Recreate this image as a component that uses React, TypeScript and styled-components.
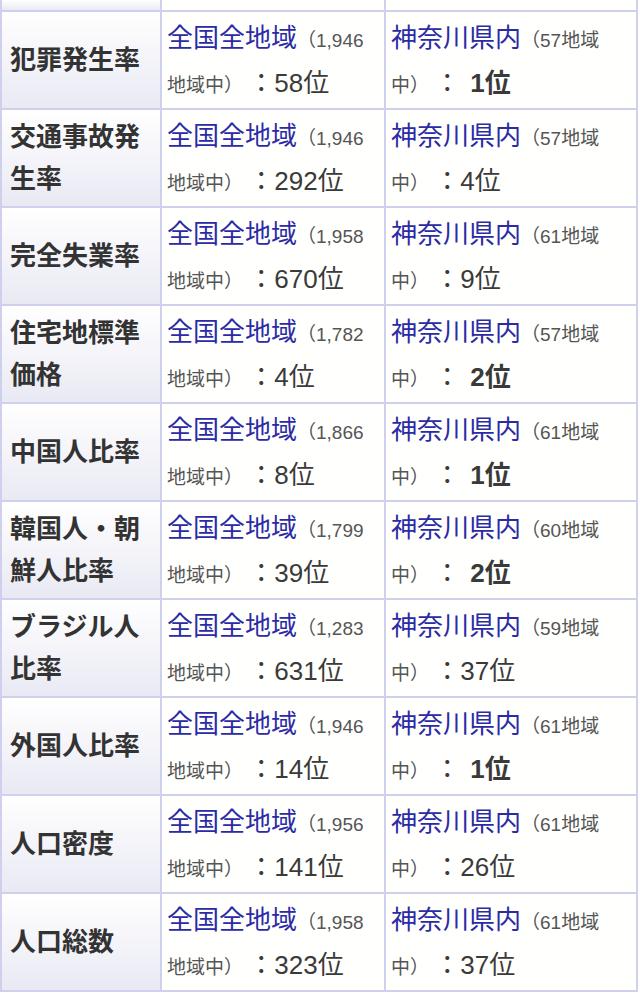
import styled, { createGlobalStyle } from "styled-components";

interface Rank {
  total: string;
  rank: string;
  bold?: boolean;
}

interface StatRow {
  label: string;
  all: Rank;
  pref: Rank;
}

const rows: StatRow[] = [
  { label: "犯罪発生率", all: { total: "1,946", rank: "58" }, pref: { total: "57", rank: "1", bold: true } },
  { label: "交通事故発生率", all: { total: "1,946", rank: "292" }, pref: { total: "57", rank: "4" } },
  { label: "完全失業率", all: { total: "1,958", rank: "670" }, pref: { total: "61", rank: "9" } },
  { label: "住宅地標準価格", all: { total: "1,782", rank: "4" }, pref: { total: "57", rank: "2", bold: true } },
  { label: "中国人比率", all: { total: "1,866", rank: "8" }, pref: { total: "61", rank: "1", bold: true } },
  { label: "韓国人・朝鮮人比率", all: { total: "1,799", rank: "39" }, pref: { total: "60", rank: "2", bold: true } },
  { label: "ブラジル人比率", all: { total: "1,283", rank: "631" }, pref: { total: "59", rank: "37" } },
  { label: "外国人比率", all: { total: "1,946", rank: "14" }, pref: { total: "61", rank: "1", bold: true } },
  { label: "人口密度", all: { total: "1,956", rank: "141" }, pref: { total: "61", rank: "26" } },
  { label: "人口総数", all: { total: "1,958", rank: "323" }, pref: { total: "61", rank: "37" } },
];

const GlobalStyle = createGlobalStyle`
  html, body {
    margin: 0;
    padding: 0;
    background: #ffffff;
    overflow: hidden;
  }
  body {
    font-family: "Liberation Sans", "Noto Sans CJK JP", sans-serif;
  }
`;

const RankCell = ({
  area,
  head,
  tail,
  data,
}: {
  area: string;
  head: string;
  tail: string;
  data: Rank;
}) => (
  <DataCell>
    <AreaLink href="#">{area}</AreaLink>
    <Small>{head}</Small>
    <Tail>
      <Small>{tail} </Small>
      ：
      <RankValue $bold={!!data.bold}>{data.rank}位</RankValue>
    </Tail>
  </DataCell>
);

export default function App() {
  return (
    <>
      <GlobalStyle />
      <Table>
        <colgroup>
          <col style={{ width: 162 }} />
          <col style={{ width: 224 }} />
          <col style={{ width: 252 }} />
        </colgroup>
        <tbody>
          {/* tail of the previous row, cut off by the screenshot */}
          <Row $cut>
            <HeadCell />
            <DataCell />
            <DataCell />
          </Row>
          {rows.map((r) => (
            <Row key={r.label}>
              <HeadCell>{r.label}</HeadCell>
              <RankCell
                area="全国全地域"
                head={`（${r.all.total}`}
                tail="地域中）"
                data={r.all}
              />
              <RankCell
                area="神奈川県内"
                head={`（${r.pref.total}地域`}
                tail="中）"
                data={r.pref}
              />
            </Row>
          ))}
        </tbody>
      </Table>
    </>
  );
}

const Table = styled.table`
  border-collapse: separate;
  border-spacing: 0;
  table-layout: fixed;
  width: 638px;
  color: #333333;
`;

const Row = styled.tr<{ $cut?: boolean }>`
  height: ${({ $cut }) => ($cut ? "12px" : "98px")};

  td {
    border-bottom: 2px solid #cfcfee;
    border-right: 2px solid #cfcfee;
  }
  td:first-child {
    border-left: 2px solid #cfcfee;
  }
`;

const HeadCell = styled.td`
  padding: 0 8px;
  background: linear-gradient(#ffffff, #e9e9f4);
  font-size: 26px;
  font-weight: bold;
  line-height: 42px;
  color: #333333;
  vertical-align: middle;
`;

const DataCell = styled.td`
  padding: 5px 2px 0 5px;
  background: #fffffd;
  font-size: 26px;
  line-height: 42px;
  vertical-align: top;
`;

const AreaLink = styled.a`
  color: #2b2ba6;
  text-decoration: none;
`;

const Small = styled.span`
  font-size: 19px;
  color: #555555;
`;

const Tail = styled.span`
  white-space: nowrap;
  color: #3a3a3a;
`;

const RankValue = styled.span<{ $bold: boolean }>`
  font-weight: ${({ $bold }) => ($bold ? "bold" : "normal")};
  margin-left: ${({ $bold }) => ($bold ? "10px" : "0")};
`;
